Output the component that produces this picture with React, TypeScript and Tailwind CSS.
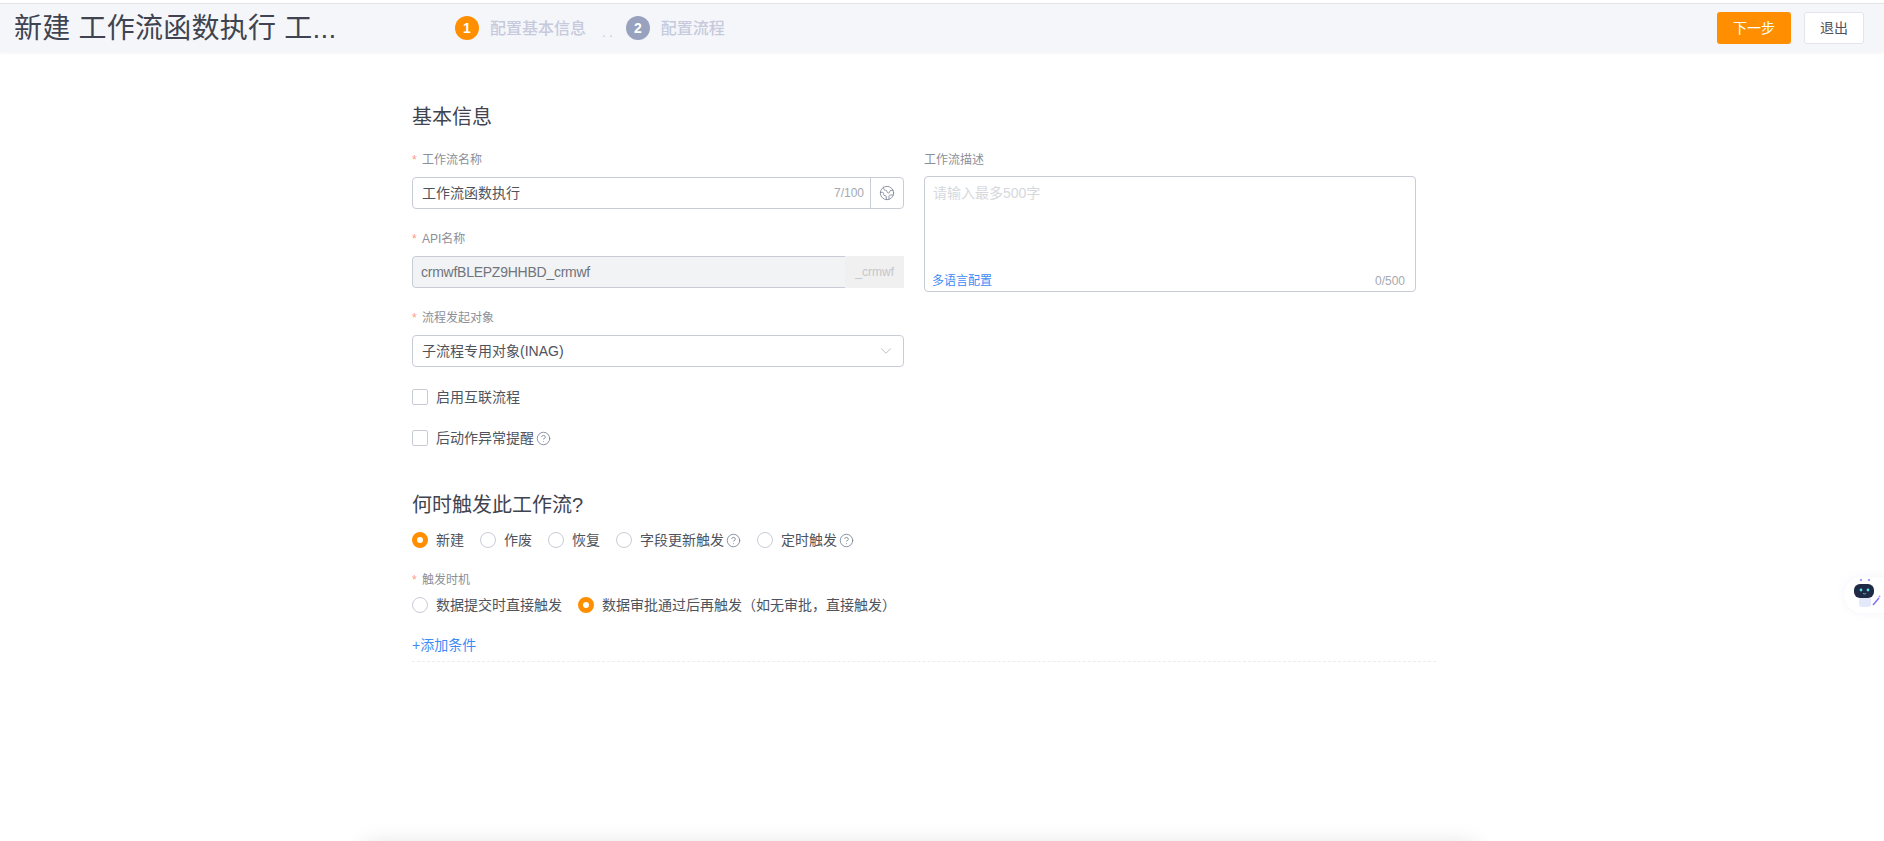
import { ChevronDown, CircleHelp, Earth } from 'lucide-react';

function Label({ text, required = true }: { text: string; required?: boolean }) {
  return (
    <div className="flex h-5 items-center pt-[2px] text-xs text-[#8b8f98]">
      {required && <span className="mr-[6px] w-1 text-[#ff9a88]">*</span>}
      {text}
    </div>
  );
}

function Help() {
  return <CircleHelp size={15} strokeWidth={1.4} className="ml-[2px] text-[#7d8597]" />;
}

function Radio({ text, checked = false, help = false }: { text: string; checked?: boolean; help?: boolean }) {
  return (
    <label className="flex h-5 items-center gap-2 text-sm text-[#4f535c]">
      <span
        className={
          checked
            ? 'size-4 rounded-full border-[5px] border-[#ff8f00] bg-white'
            : 'size-4 rounded-full border border-[#c8ccd6] bg-white'
        }
      />
      <span className="flex items-center">
        {text}
        {help && <Help />}
      </span>
    </label>
  );
}

function Check({ text, help = false }: { text: string; help?: boolean }) {
  return (
    <label className="flex h-5 items-center gap-2 text-sm text-[#4f535c]">
      <span className="size-4 rounded-[2px] border border-[#c8ccd6] bg-white" />
      <span className="flex items-center">
        {text}
        {help && <Help />}
      </span>
    </label>
  );
}

function Robot() {
  return (
    <svg width="32" height="36" viewBox="0 0 32 36">
      <circle cx="9" cy="3" r="1.3" fill="#a9a4f5" />
      <circle cx="17" cy="3" r="1.3" fill="#a9a4f5" />
      <rect x="7" y="20" width="12" height="10" rx="3" fill="#e4e8fb" />
      <rect x="2" y="7" width="20" height="14" rx="6" fill="#1f2a44" />
      <circle cx="9" cy="13" r="1.4" fill="#55d8f0" />
      <circle cx="16" cy="13" r="1.4" fill="#55d8f0" />
      <path d="M11 16.5q1.5 1 3 0" stroke="#55d8f0" strokeWidth="0.8" fill="none" />
      <path d="M21 28l6-7" stroke="#7a6cf0" strokeWidth="1.4" />
      <circle cx="27.5" cy="19.5" r="1" fill="#d58cf5" />
    </svg>
  );
}

export default function App() {
  return (
    <div className="relative h-[841px] w-full overflow-hidden bg-white pt-[3px] font-['Liberation_Sans','Noto_Sans_CJK_SC',sans-serif]">
      {/* Header */}
      <header className="flex h-[49px] items-center border-t border-[#e3e4e6] bg-[#f5f6fa] pl-[14px] pr-5 shadow-[0_1px_3px_rgba(0,0,0,0.06)]">
        <h1 className="mt-[2px] w-[322px] whitespace-nowrap text-[28px] tracking-[0.25px] text-[#3f4450]">新建 工作流函数执行 工...</h1>
        <div className="ml-[119px] flex items-center">
          <span className="flex size-6 items-center justify-center rounded-full bg-[#ff8f00] text-sm font-bold text-white">1</span>
          <span className="ml-[11px] mt-px text-base font-medium text-[#c6cadc]">配置基本信息</span>
          <span className="ml-4 mt-2 text-sm tracking-[3px] text-[#c6cadc]">..</span>
          <span className="ml-[10px] flex size-6 items-center justify-center rounded-full bg-[#98a2be] text-sm font-bold text-white">2</span>
          <span className="ml-[11px] mt-px text-base font-medium text-[#c6cadc]">配置流程</span>
        </div>
        <div className="ml-auto flex gap-[13px]">
          <button className="h-8 w-[74px] rounded-[3px] bg-[#ff8f00] text-sm text-white">下一步</button>
          <button className="h-8 w-[60px] rounded-[3px] border border-[#e2e5ee] bg-white text-sm text-[#4f535c]">退出</button>
        </div>
      </header>

      {/* Form */}
      <main className="ml-[412px] w-[1024px] pt-[51px]">
        <h2 className="h-7 text-xl leading-7 text-[#3f4450]">基本信息</h2>

        <div className="mt-[18px] flex gap-5">
          <div className="w-[492px]">
            <Label text="工作流名称" />
            <div className="mt-2 flex h-8 items-center rounded-[4px] border border-[#c8ccd6] text-sm text-[#4f535c]">
              <span className="flex-1 pl-[9px]">工作流函数执行</span>
              <span className="mr-[6px] text-xs text-[#a5a9b2]">7/100</span>
              <span className="flex h-full w-[33px] items-center justify-center border-l border-[#c8ccd6]">
                <Earth size={16} strokeWidth={1.25} className="text-[#7d8597]" />
              </span>
            </div>

            <div className="mt-[19px]">
              <Label text="API名称" />
            </div>
            <div className="mt-2 flex h-8 overflow-hidden rounded-l-[4px]">
              <div className="flex flex-1 items-center rounded-l-[4px] border border-r-0 border-[#c8ccd6] bg-[#f2f3f5] pl-[8px] text-sm tracking-[-0.25px] text-[#70747d]">
                crmwfBLEPZ9HHBD_crmwf
              </div>
              <div className="flex w-[59px] items-center justify-end bg-[#f0f0f0] pr-[10px] text-xs text-[#c4c6ca]">_crmwf</div>
            </div>

            <div className="mt-[19px]">
              <Label text="流程发起对象" />
            </div>
            <div className="mt-2 flex h-8 items-center justify-between rounded-[4px] border border-[#c8ccd6] pl-[9px] pr-[8px] text-sm text-[#4f535c]">
              子流程专用对象(INAG)
              <ChevronDown size={18} strokeWidth={1} className="text-[#a5a9b2]" />
            </div>

            <div className="mt-5">
              <Check text="启用互联流程" />
            </div>
            <div className="mt-[21px]">
              <Check text="后动作异常提醒" help />
            </div>
          </div>

          <div className="w-[492px]">
            <Label text="工作流描述" required={false} />
            <div className="relative mt-[7px] h-[116px] rounded-[4px] border border-[#c8ccd6]">
              <div className="pl-2 pt-[6px] text-sm text-[#d6d8dd]">请输入最多500字</div>
              <div className="absolute inset-x-0 bottom-[2px] flex items-center justify-between pl-[7px] pr-[10px] text-xs">
                <span className="text-[#3d8bf5]">多语言配置</span>
                <span className="text-[#a5a9b2]">0/500</span>
              </div>
            </div>
          </div>
        </div>

        <h2 className="mt-[43px] h-7 text-xl leading-7 text-[#3f4450]">何时触发此工作流?</h2>
        <div className="mt-[11px] flex gap-4">
          <Radio text="新建" checked />
          <Radio text="作废" />
          <Radio text="恢复" />
          <Radio text="字段更新触发" help />
          <Radio text="定时触发" help />
        </div>

        <div className="mt-[19px]">
          <Label text="触发时机" />
        </div>
        <div className="mt-1.5 flex gap-4">
          <Radio text="数据提交时直接触发" />
          <Radio text="数据审批通过后再触发（如无审批，直接触发）" checked />
        </div>

        <div className="mt-5 h-5 text-sm leading-5 text-[#3d8bf5]">+添加条件</div>
        <div className="mt-1.5 border-t border-dashed border-[#ececec]" />
      </main>

      {/* Floating assistant */}
      <div className="absolute left-[1844px] top-[577px] flex h-[36px] w-[60px] items-center rounded-l-full bg-white pl-[8px] shadow-[0_0_8px_rgba(120,110,220,0.08)]">
        <Robot />
      </div>

      {/* Panel peeking in from below the fold */}
      <div className="absolute left-[365px] top-[846px] h-10 w-[1110px] shadow-[0_0_24px_rgba(0,0,0,0.14)]" />
    </div>
  );
}
